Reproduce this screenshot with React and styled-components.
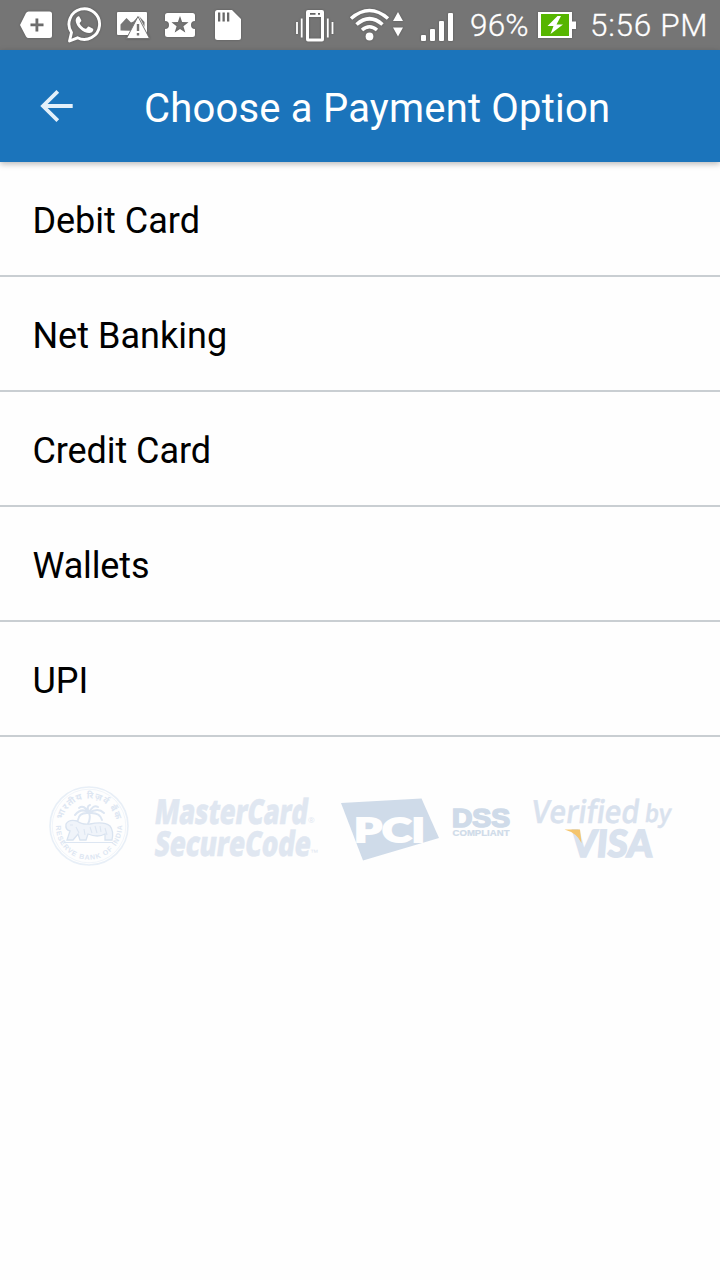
import React from "react";
import styled, { createGlobalStyle } from "styled-components";

const GlobalStyle = createGlobalStyle`
  * { box-sizing: border-box; }
  body { margin: 0; background: #fefefe; font-family: Roboto, sans-serif; }
`;

const Screen = styled.main`
  display: flex;
  flex-direction: column;
  width: 720px;
  height: 1280px;
  background: #fefefe;
  overflow: hidden;
`;

const StatusBar = styled.div`
  display: flex;
  align-items: center;
  height: 50px;
  background: #757575;
  color: #fff;
`;

const StatusIcon = styled.svg`
  flex: none;
  display: block;
  width: ${(p) => p.$w}px;
  height: 50px;
  margin-left: ${(p) => p.$gap || 0}px;
  filter: drop-shadow(0 0 1px rgba(0, 0, 0, 0.25));
`;

const StatusText = styled.span`
  width: ${(p) => p.$w}px;
  margin-left: ${(p) => p.$gap}px;
  padding-top: 1px;
  font-size: 31.5px;
  font-weight: 300;
  -webkit-text-stroke: 0.3px #fff;
  line-height: 50px;
  letter-spacing: ${(p) => p.$track}px;
  white-space: nowrap;
`;

const Header = styled.header`
  display: flex;
  align-items: center;
  height: 112px;
  flex: none;
  padding-left: 40px;
  background: #1b74bb;
  box-shadow: 0 2px 6px rgba(0, 0, 0, 0.28);
  z-index: 1;
`;

const BackButton = styled.button`
  display: block;
  width: 34px;
  height: 34px;
  padding: 0;
  border: 0;
  background: none;
`;

const Title = styled.h1`
  margin: 0 0 0 70px;
  padding-top: 5px;
  font-size: 40px;
  line-height: 48px;
  font-weight: 400;
  letter-spacing: 0.2px;
  color: #fff;
  white-space: nowrap;
`;

const OptionList = styled.ul`
  margin: 0;
  padding: 0;
  list-style: none;
`;

const Option = styled.li`
  display: flex;
  align-items: center;
  height: 115px;
  padding: 4px 0 0 32.4px;
  border-bottom: 2px solid #c9ced2;
  font-size: 36px;
  letter-spacing: ${(p) => p.$track}px;
  color: #000;
`;

const TrustRow = styled.footer`
  display: flex;
  align-items: flex-start;
  padding: 43px 0 0 45px;
`;

const Mark = styled.svg`
  display: block;
  flex: none;
  width: ${(p) => p.$w}px;
  height: 95px;
  overflow: visible;
`;

const OPTIONS = [
  { label: "Debit Card", track: 0 },
  { label: "Net Banking", track: 0.04 },
  { label: "Credit Card", track: -0.06 },
  { label: "Wallets", track: -0.12 },
  { label: "UPI", track: 0 },
];

function NotificationIcons() {
  return (
    <StatusIcon $w={250} viewBox="0 0 250 50" fill="#fff">
      <path fillRule="evenodd" d="M28.500 11.500H49.500Q52 11.500 52 14V35.500Q52 38 49.500 38H28.500Q27 38 26 36.500L20 25L26 13Q27 11.500 28.500 11.500ZM35.500 18.500V23.500H30.500V26.300H35.500V31.500H38.300V26.300H43.500V23.500H38.300V18.500Z" />
      <path d="M69.500 41L71.500 32.500A15.300 15.300 0 1 1 77.500 37.800Z" fill="none" stroke="#fff" strokeWidth="2.900" strokeLinejoin="round" />
      <path d="M79.300 16.500C78 15.500 75.500 18 75.700 21C76.200 26.500 83.500 33.300 89.500 33C92.500 32.700 94 30 93 28.700L88.800 26.500C87.500 26.200 86.900 29 85.500 28.800C83 27.900 80.500 25.400 79.600 23.200C80 22 81.600 21.700 81.300 20.300Z" />
      <path d="M118 12H146Q147 12 147 13V35H118Q117 35 117 34V13Q117 12 118 12Z" />
      <path d="M120.500 30.500V24.500L126.500 18L131 22.500L133.500 21.500L138 16.500L139 31Z" fill="#757575" />
      <path d="M139 16L144.500 22V27Z" fill="#757575" />
      <path d="M138 16.500L149.500 38.500H126.500Z" stroke="#757575" strokeWidth="1" />
      <path d="M136.800 24H139.200V31H136.800ZM136.800 33H139.200V35.500H136.800Z" fill="#757575" />
      <path fillRule="evenodd" d="M167.500 13H192.500Q195 13 195 15.500V21A4 4 0 0 0 195 29V34.500Q195 37 192.500 37H167.500Q165 37 165 34.500V29A4 4 0 0 0 165 21V15.500Q165 13 167.500 13ZM180 16L177.900 22L171.500 22.300L176.600 26.300L174.700 32.500L180 28.900L185.300 32.500L183.400 26.300L188.500 22.300L182.100 22Z" />
      <path fillRule="evenodd" d="M217.500 10H232L241 19V37.500Q241 40 238.500 40H217.500Q215 40 215 37.500V12.500Q215 10 217.500 10ZM218 12.500V21.500H220.300V12.500ZM222.500 12.500V21.500H224.800V12.500ZM227 12.500V21.500H229.300V12.500Z" />
    </StatusIcon>
  );
}

function SignalIcons() {
  return (
    <StatusIcon $w={170} $gap={40} viewBox="290 0 170 50" fill="#fff">
      <path fillRule="evenodd" d="M308 10H322Q324 10 324 12V39.500Q324 41.500 322 41.500H308Q306 41.500 306 39.500V12Q306 10 308 10ZM309 17V38.500H321V17ZM310 13V14.700H315.500V13ZM318 13V14.700H320V13Z" />
      <path d="M297 22V34M301.700 18.500V37.500M327.800 18.500V37.500M332.500 22V34" stroke="#fff" strokeWidth="1.800" />
      <g fill="none" stroke="#fff" strokeWidth="3.600">
        <path d="M351 18.500Q369.500 2.500 388 18.500" />
        <path d="M356.500 24.500Q369.500 13 382.500 24.500" />
        <path d="M362 30Q369.500 23.500 377 30" />
      </g>
      <circle cx="369.500" cy="36.500" r="3.900" />
      <path d="M398 12L403 21H393ZM398 36.500L393 27.500H403Z" />
      <rect x="421" y="35" width="5" height="6" rx="1" />
      <rect x="430" y="29" width="5" height="12" rx="1" />
      <rect x="439" y="21" width="5" height="20" rx="1" />
      <rect x="448" y="13" width="5" height="28" rx="1" />
    </StatusIcon>
  );
}

function BatteryIcon() {
  return (
    <StatusIcon $w={40} viewBox="537 0 40 50">
      <path d="M538 12H572V21.500H576V29H572V38H538Z" fill="#fff" />
      <path d="M541 14H569V36H541Z" fill="#56b500" />
      <path d="M557.500 16L547.500 26H553.500L550.500 34L563 24.500H556.500L561 16Z" fill="#fff" />
    </StatusIcon>
  );
}

function ReserveBankSeal() {
  return (
    <Mark $w={100} viewBox="45 780 100 95" fill="none" stroke="#e8eff7">
      <circle cx="89" cy="826" r="39" strokeWidth="1.600" />
      <circle cx="89" cy="826" r="36.800" strokeWidth="0.600" />
      <defs>
        <path id="seal-top" d="M61.500 826A27.500 27.500 0 0 1 116.500 826" />
        <path id="seal-bottom" d="M56.500 821A33 33 0 1 0 121.500 821" />
      </defs>
      <g fill="#dde6f2" stroke="none" fontWeight="700">
        <text fontSize="9" fontFamily="'Noto Sans', sans-serif">
          <textPath href="#seal-top" startOffset="50%" textAnchor="middle" textLength="74">भारतीय रिज़र्व बैंक</textPath>
        </text>
        <text fontSize="7" fontFamily="'Liberation Sans', sans-serif">
          <textPath href="#seal-bottom" startOffset="50%" textAnchor="middle" textLength="118">· RESERVE BANK OF INDIA ·</textPath>
        </text>
      </g>
      <path d="M88 824Q91 818 89 813Q82 807 75 815M89 813Q79 812 78 820M89 813Q84 804 79 808M89 813Q86 806 90 805M89 813Q93 804 98 807M89 813Q98 807 104 813M89 813Q100 812 102 820" strokeWidth="2" stroke="#dde6f2" strokeLinecap="round" />
      <path d="M66 824Q69 819 77 821Q82 825 90 824Q104 821 110 826Q114 831 112 840H105V834Q98 838 88 834L86 840H80L78 834L73 840H67L70 831Q65 830 66 824Z" fill="#f0f4fa" stroke="#d9e3f0" strokeWidth="1.300" />
      <path d="M70 825H73M76 827L79 833M90 827L92 833M95 826L97 833M100 826L101 832M105 828L107 835M84 829L85 835M64 842.500H113" strokeWidth="1.100" stroke="#dde6f2" />
    </Mark>
  );
}

function MasterCardMark() {
  return (
    <Mark $w={190} viewBox="145 780 190 95" fill="#e0e7f1" fontFamily="'Open Sans', sans-serif">
      <g fontSize="34.500" fontWeight="800" stroke="#e0e7f1" strokeWidth="0.500">
        <text transform="translate(153.5 823.5) skewX(-8)" textLength="153" lengthAdjust="spacingAndGlyphs">MasterCard</text>
        <text transform="translate(153.5 855.5) skewX(-8)" textLength="156" lengthAdjust="spacingAndGlyphs">SecureCode</text>
      </g>
      <text x="308" y="823" fontSize="8">®</text>
      <text x="310" y="855" fontSize="8" fontFamily="'Liberation Sans', sans-serif">™</text>
    </Mark>
  );
}

function PciMark() {
  return (
    <Mark $w={190} viewBox="335 780 190 95" fill="#cfdbe9">
      <path d="M341 803L421.500 798.500L439 838L363 860.500Z" />
      <text x="354" y="842" fill="#fefefe" stroke="#fefefe" strokeWidth="1.800" fontFamily="Lato, sans-serif" fontWeight="900" fontSize="33" textLength="71" lengthAdjust="spacingAndGlyphs">PCI</text>
      <g fontFamily="'Liberation Sans', sans-serif" fontWeight="700" stroke="#cfdbe9">
        <text x="452" y="827" fontSize="25" strokeWidth="1.600" textLength="58" lengthAdjust="spacingAndGlyphs">DSS</text>
        <text x="452.500" y="836.300" fontSize="8.500" strokeWidth="0.200" textLength="57" lengthAdjust="spacingAndGlyphs">COMPLIANT</text>
      </g>
    </Mark>
  );
}

function VerifiedByVisaMark() {
  return (
    <Mark $w={150} viewBox="525 780 150 95" fill="#d9e2ee" stroke="#d9e2ee" strokeWidth="0.500" fontFamily="'Open Sans', sans-serif">
      <text transform="translate(530.5 822.5) skewX(-8)" fontSize="32" fontWeight="600" textLength="107.500" lengthAdjust="spacingAndGlyphs">Verified</text>
      <text transform="translate(644 822) skewX(-8)" fontSize="24.500" fontWeight="600" textLength="26" lengthAdjust="spacingAndGlyphs">by</text>
      <text transform="translate(570.5 856.5) skewX(-5)" fontFamily="Lato, sans-serif" fontSize="37.500" fontWeight="900" strokeWidth="1.600" textLength="81" lengthAdjust="spacingAndGlyphs">VISA</text>
      <path d="M564.500 829.500H580L581.500 843Q577 833 564.500 829.500Z" fill="#f5c56d" stroke="none" />
    </Mark>
  );
}

export default function App() {
  return (
    <Screen>
      <GlobalStyle />
      <StatusBar>
        <NotificationIcons />
        <SignalIcons />
        <StatusText $w={67} $gap={10} $track={0.2}>96%</StatusText>
        <BatteryIcon />
        <StatusText $w={125} $gap={13} $track={0.7}>5:56 PM</StatusText>
      </StatusBar>
      <Header>
        <BackButton aria-label="Back">
          <svg width="34" height="34" viewBox="40 89 34 34" fill="none" stroke="#e3f0fa" strokeWidth="3.800">
            <path d="M72.700 106H43M57.800 91.300L43 106L57.800 120.700" />
          </svg>
        </BackButton>
        <Title>Choose a Payment Option</Title>
      </Header>
      <OptionList>
        {OPTIONS.map((o) => (
          <Option key={o.label} $track={o.track}>{o.label}</Option>
        ))}
      </OptionList>
      <TrustRow>
        <ReserveBankSeal />
        <MasterCardMark />
        <PciMark />
        <VerifiedByVisaMark />
      </TrustRow>
    </Screen>
  );
}
